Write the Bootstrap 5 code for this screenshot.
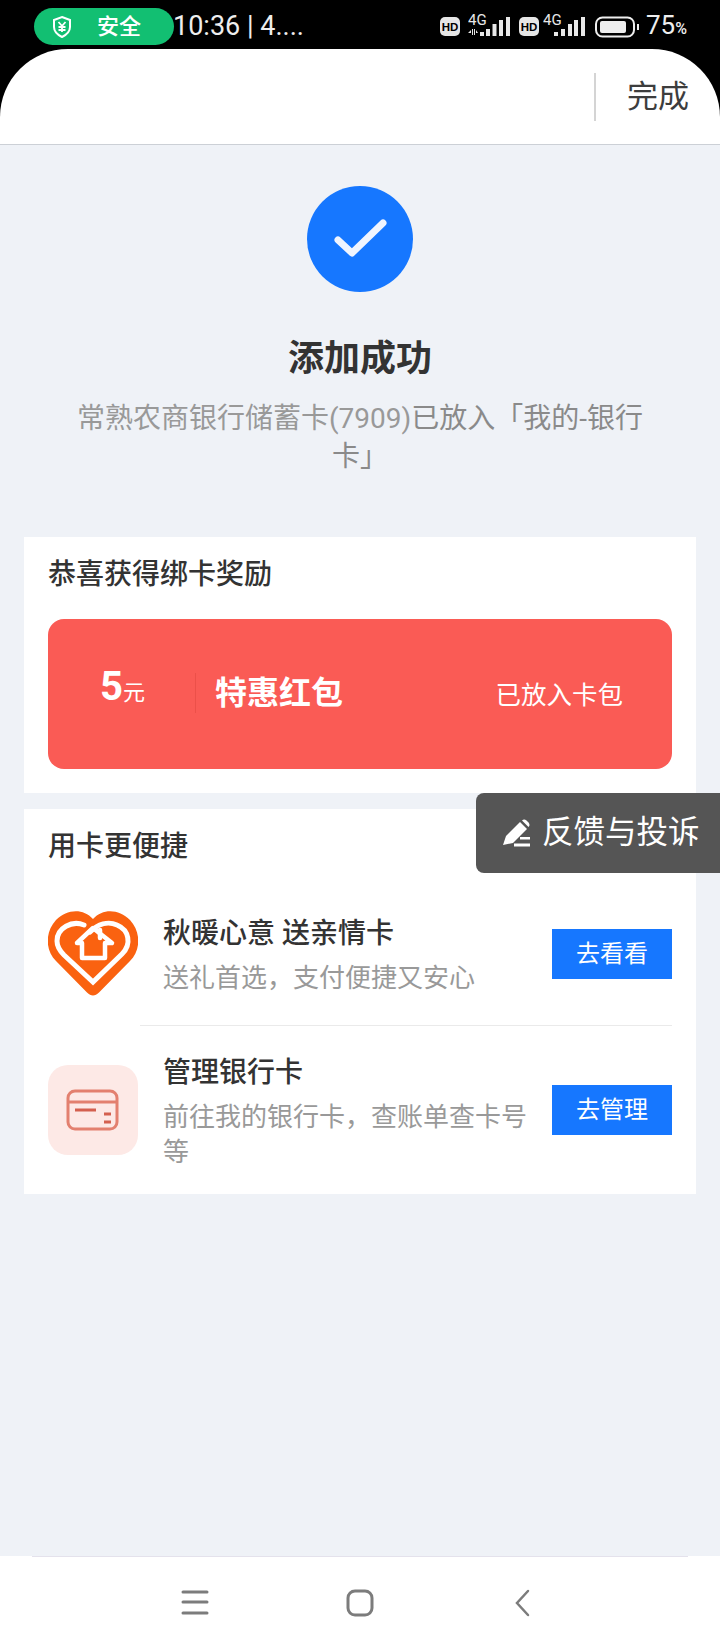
<!DOCTYPE html>
<html lang="zh">
<head>
<meta charset="utf-8">
<title>添加成功</title>
<link href="https://cdn.jsdelivr.net/npm/bootstrap@5.3.0/dist/css/bootstrap.min.css" rel="stylesheet">
<style>
html,body{height:1650px;overflow:hidden}
body{font-family:Roboto,"Noto Sans CJK SC",sans-serif;background:#000;color:#2b2b2b}
.shell{width:720px;height:1650px;position:relative}
.sbar{height:49px;padding:8px 34px 0}
.safe{width:140px;height:37px;background:#12bf72;border-radius:19px;color:#fff;font-size:22px;font-weight:500;line-height:37px;padding-left:17px;gap:24px}
.clock{color:#eee;font-size:27px;line-height:37px;margin-left:-1px}
.stat{margin-left:auto;margin-right:-1px;gap:8px;height:37px}
.stat svg{display:block}
.g2{margin-left:-4px}
.batt{margin-left:1px}
.pct{font-size:26px;line-height:37px;color:#eee;margin-left:-1px}
.pct small{font-size:16px;font-weight:500}
.head{height:96px;background:#fff;border-radius:68px 68px 0 0;border-bottom:1px solid #ccd0d6}
.vline{width:2px;height:48px;background:#d4d4d4;margin-right:31px}
.done{font-size:31px;color:#3d3d3d;margin-right:31px;line-height:48px}
.page{background:#eff2f7;flex:1 1 auto}
.okc{width:106px;height:106px;background:#1677ff;border-radius:50%;margin-top:41px}
.ttl{font-size:36px;font-weight:700;line-height:48px;margin:36px 0 0;color:#333}
.sub{font-size:28px;line-height:38px;color:#999;width:590px;margin:17px auto 0}
.sub b{font-weight:400;color:#8a8a8a}
.panel{background:#fff;margin:0 24px}
.p1{margin-top:61px;height:256px;padding:19px 24px 0}
.ph{font-size:28px;font-weight:500;line-height:38px;color:#333}
.redc{height:150px;margin-top:25px;background:#fa5b55;border-radius:16px;color:#fff;padding:0 49px 3px 52px}
.amt{font-size:40px;font-weight:700;line-height:48px;width:95px;margin-top:-6px}
.amt span{font-size:22px;font-weight:400}
.rsep{width:1px;height:40px;background:#ec5049;margin-right:19px}
.rname{font-size:32px;font-weight:700}
.rstate{font-size:25.500px;margin-left:auto;margin-top:5px}
.p2{margin-top:16px;height:385px;padding:19px 24px 0}
.item{gap:25px}
.i1{margin-top:44px;height:115px}
.i2{height:168px;padding-top:21px}
.ico{width:90px;height:90px;flex:none}
.ic2{background:#fde9e6;border-radius:20px;margin-top:18px}
.itxt{flex:1 1 auto;min-width:0}
.i1 .itxt{padding-top:4px}
.i2 .itxt{padding-top:6px}
.nm{font-size:28px;font-weight:500;line-height:40px;color:#333}
.ds{font-size:26px;line-height:35px;color:#999;margin-top:7px}
.go{width:120px;height:50px;flex:none;background:#1677ff;color:#fff;font-size:24px;border:0;border-radius:0;padding:0;line-height:50px}
.go:hover{background:#1677ff;color:#fff}
.go1{margin-top:19px}
.go2{margin-top:38px}
.rule{height:1px;background:#eaeaea;margin-left:92px}
.fb{position:absolute;right:0;top:793px;width:244px;height:80px;background:#555;border-radius:8px 0 0 8px;color:#fff;font-size:31.500px;padding-left:25px;gap:11px}
.foot{height:94px;background:#fff;position:relative}
.fline{position:absolute;left:32px;right:32px;top:0;height:1px;background:#e4e2ec}
.foot svg{position:absolute;top:33px}
</style>
</head>
<body>
<div class="shell d-flex flex-column">
  <div class="sbar d-flex flex-shrink-0">
    <div class="safe d-flex align-items-center">
      <svg width="22" height="24" viewBox="0 0 22 24" fill="none" stroke="#fff" stroke-width="2"><path d="M11 2l8 3v7c0 5-4 8-8 10-4-2-8-5-8-10V5z"/><path d="M7.500 7l3.500 4 3.500-4M11 11v6M7.500 12h7M7.500 15h7" stroke-width="1.800"/></svg>
      <span>安全</span>
    </div>
    <div class="clock">10:36 | 4....</div>
    <div class="stat d-flex align-items-center">
      <svg width="20" height="19" viewBox="0 0 20 19"><rect width="20" height="19" rx="5" fill="#e6e6e6"/><text x="10" y="14" font-size="11.500" font-weight="800" text-anchor="middle" fill="#000" font-family="Liberation Sans">HD</text></svg>
      <svg width="43" height="33" viewBox="0 0 43 33" fill="#e8e8e8"><text x="0" y="15" font-size="15" font-family="Roboto">4G</text><path d="M0 23l3-3v3zM4 19h1v6H4zM6 19h1v6H6zM8 23v-3l2 3z"/><rect x="12" y="22" width="4" height="4"/><rect x="18" y="19" width="4" height="7"/><rect x="24.500" y="14" width="4" height="12"/><rect x="31" y="10" width="4" height="16"/><rect x="38" y="7" width="4" height="19"/></svg>
      <svg width="20" height="19" viewBox="0 0 20 19"><rect width="20" height="19" rx="5" fill="#e6e6e6"/><text x="10" y="14" font-size="11.500" font-weight="800" text-anchor="middle" fill="#000" font-family="Liberation Sans">HD</text></svg>
      <svg class="g2" width="43" height="33" viewBox="0 0 43 33" fill="#e8e8e8"><text x="0" y="15" font-size="15" font-family="Roboto">4G</text><rect x="11" y="22" width="4" height="4"/><rect x="18" y="19" width="4" height="7"/><rect x="25" y="14" width="4" height="12"/><rect x="31" y="10" width="4" height="16"/><rect x="38" y="7" width="4" height="19"/></svg>
      <svg class="batt" width="44" height="22" viewBox="0 0 44 22" fill="none"><rect x="1" y="1.500" width="38" height="19" rx="6.500" stroke="#eee" stroke-width="2"/><rect x="5" y="5" width="26" height="12" rx="2" fill="#eee"/><rect x="42" y="8" width="2" height="6" fill="#eee"/></svg>
      <div class="pct">75<small>%</small></div>
    </div>
  </div>

  <div class="head d-flex justify-content-end align-items-center flex-shrink-0">
    <div class="vline"></div>
    <div class="done">完成</div>
  </div>

  <main class="page d-flex flex-column">
    <div class="text-center">
      <div class="okc d-inline-flex">
        <svg width="106" height="106" viewBox="0 0 106 106" fill="none"><path d="M31 54L45 67L76 37" stroke="#f0f5ff" stroke-width="7" stroke-linecap="round" stroke-linejoin="round"/></svg>
      </div>
      <h1 class="ttl">添加成功</h1>
      <p class="sub mb-0"><span>常熟农商银行储蓄卡(7909)</span><b>已放入「我的-银行</b><b>卡」</b></p>
    </div>

    <section class="panel p1">
      <div class="ph">恭喜获得绑卡奖励</div>
      <div class="redc d-flex align-items-center">
        <div class="amt">5<span>元</span></div>
        <div class="rsep"></div>
        <div class="rname">特惠红包</div>
        <div class="rstate">已放入卡包</div>
      </div>
    </section>

    <section class="panel p2">
      <div class="ph">用卡更便捷</div>
      <div class="item i1 d-flex align-items-start">
        <svg class="ico" viewBox="0 0 90 90" fill="none">
          <path d="M45 85.500C43 85.500 41 84.500 39 82.500L8 51C-3 40-3 22 8 10C19-1 35-2 45 9C55-2 71-1 82 10C93 22 93 40 82 51L51 82.500C49 84.500 47 85.500 45 85.500Z" fill="#fa6210"/>
          <path d="M36 15C24 10 9 18 9 31C9 37 12 41 16 45L45 72L74 44C84 34 81 20 69 15C60 11 50 14 42 22" stroke="#fff" stroke-width="5" stroke-linecap="round"/>
          <path d="M29 33L45 18L64 33H57V48H34V33Z" stroke="#fff" stroke-width="4.500" stroke-linejoin="round"/>
          <path d="M52 20V28" stroke="#fff" stroke-width="4.500" stroke-linecap="round"/>
        </svg>
        <div class="itxt">
          <div class="nm">秋暖心意 送亲情卡</div>
          <div class="ds">送礼首选，支付便捷又安心</div>
        </div>
        <button class="btn go go1" type="button">去看看</button>
      </div>
      <div class="rule"></div>
      <div class="item i2 d-flex align-items-start">
        <div class="ico ic2 d-flex align-items-center justify-content-center">
          <svg width="54" height="42" viewBox="0 0 54 42" fill="none"><rect x="2" y="2" width="49" height="38" rx="7" stroke="#e3806f" stroke-width="3"/><path d="M2 13h49" stroke="#e3806f" stroke-width="3"/><path d="M9 21h21M38 25h7M38 33h7" stroke="#d4604f" stroke-width="3"/></svg>
        </div>
        <div class="itxt">
          <div class="nm">管理银行卡</div>
          <div class="ds">前往我的银行卡，查账单查卡号等</div>
        </div>
        <button class="btn go go2" type="button">去管理</button>
      </div>
    </section>
  </main>

  <footer class="foot flex-shrink-0">
    <div class="fline"></div>
    <svg style="left:181px" width="28" height="26" viewBox="0 0 28 26" stroke="#7c7c7c" stroke-width="3" stroke-linecap="round"><path d="M2 3h24M2 13h24M2 24h24"/></svg>
    <svg style="left:346px" width="28" height="28" viewBox="0 0 28 28" fill="none" stroke="#7c7c7c" stroke-width="3"><rect x="2" y="2" width="24" height="24" rx="7"/></svg>
    <svg style="left:514px" width="18" height="28" viewBox="0 0 18 28" fill="none" stroke="#7c7c7c" stroke-width="2.500" stroke-linecap="round"><path d="M14 2L3 14L14 26"/></svg>
  </footer>

  <div class="fb d-flex align-items-center">
    <svg width="30" height="30" viewBox="0 0 30 30" fill="#fff"><path d="M2 27L5 18L19 4L26 11L12 25Z"/><path d="M21 2.500Q23 .5 25.500 2.500L27.500 4.500Q29.500 7 27.500 9Z"/><path d="M13 25.500h16v3H13zM19 19h10v2.500H19z"/></svg>
    <span>反馈与投诉</span>
  </div>
</div>
</body>
</html>
